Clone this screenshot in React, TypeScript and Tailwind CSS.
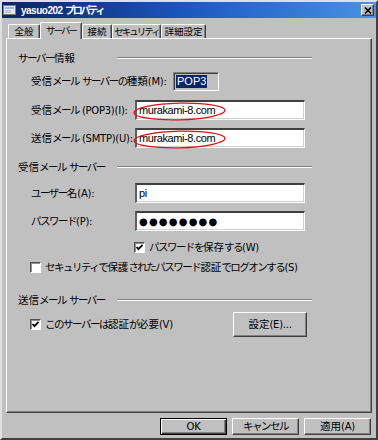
import React from "react";

type V = "label" | "tab" | "title";

const KANA = /[\u3040-\u30ff]/;
const KANJI = /[\u3400-\u9fff]/;

function runs(t: string) {
  const out: { type: string; s: string }[] = [];
  for (const ch of t) {
    const type = KANA.test(ch) ? "k" : KANJI.test(ch) ? "h" : "o";
    const last = out[out.length - 1];
    if (last && last.type === type) last.s += ch;
    else out.push({ type, s: ch });
  }
  return out;
}

const cls: Record<V, Record<string, string>> = {
  label: { k: "text-[10.5px] tracking-[-1.5px]", h: "text-[10.5px]", o: "text-[10px] tracking-[-0.25px]" },
  tab: { k: "text-[9.5px] tracking-[-2px]", h: "text-[9.5px]", o: "" },
  title: { k: "text-[10px] tracking-[-2.2px]", h: "text-[10px]", o: "" },
};

function Jp({ t, v = "label" }: { t: string; v?: V }) {
  return (
    <>
      {runs(t).map((r, i) => (
        <span key={i} className={cls[v][r.type]}>
          {r.s}
        </span>
      ))}
    </>
  );
}

function Heading({ t }: { t: string }) {
  return (
    <div className="flex items-center h-[12px] pl-[11px]">
      <div className="w-[99px] whitespace-nowrap">
        <Jp t={t} />
      </div>
      <div className="w-[195px] flex flex-col">
        <div className="h-[1px] bg-[#808080]" />
        <div className="h-[1px] bg-white" />
      </div>
    </div>
  );
}

function Ellipse() {
  return (
    <svg
      className="absolute left-[-5px] top-[-1px] pointer-events-none"
      width="100"
      height="22"
      viewBox="0 0 100 22"
    >
      <ellipse
        cx="47.5"
        cy="10.5"
        rx="45.5"
        ry="8.3"
        fill="none"
        stroke="#dd1111"
        strokeWidth="1.3"
        transform="rotate(-1.5 47.5 10.5)"
      />
    </svg>
  );
}

function TextInput({
  value,
  ellipse,
  dots,
}: {
  value: string;
  ellipse?: boolean;
  dots?: boolean;
}) {
  return (
    <div className="relative w-[170px] h-[20px] bg-white border-t-2 border-l-2 border-t-[#404040] border-l-[#606060] border-b border-r border-b-white border-r-white shadow-[inset_-1px_-1px_0_#d0d0d0] flex items-center pl-[2px]">
      {dots ? (
        <span className="font-['DejaVu_Sans',sans-serif] text-[10px] tracking-[1.2px] leading-none">
          ●●●●●●●●
        </span>
      ) : (
        <span className="font-['Liberation_Sans',sans-serif] text-[11px] tracking-[-0.4px] leading-none">
          {value}
        </span>
      )}
      {ellipse && <Ellipse />}
    </div>
  );
}

function Check({ checked }: { checked?: boolean }) {
  return (
    <div className="w-[11px] h-[11px] bg-white border-t border-l border-t-[#505050] border-l-[#505050] border-b border-r border-b-white border-r-white shadow-[inset_1px_1px_0_#909090] flex items-center justify-center shrink-0">
      {checked && (
        <svg width="9" height="9" viewBox="0 0 9 9">
          <path d="M1.5 4 L3.5 6.2 L7.5 1.8" fill="none" stroke="#000" strokeWidth="1.8" />
        </svg>
      )}
    </div>
  );
}

function Button({
  t,
  w,
  h,
  def,
}: {
  t: string;
  w: string;
  h: string;
  def?: boolean;
}) {
  return (
    <div
      className={
        def
          ? `${w} ${h} bg-[#c0c0c0] border border-black shadow-[inset_1px_1px_0_#ffffff,inset_-1px_-1px_0_#404040,inset_-2px_-2px_0_#808080] flex items-center justify-center whitespace-nowrap`
          : `${w} ${h} bg-[#c0c0c0] border-t border-l border-t-white border-l-white border-b border-r border-b-[#404040] border-r-[#404040] shadow-[inset_-1px_-1px_0_#808080] flex items-center justify-center whitespace-nowrap`
      }
    >
      <Jp t={t} />
    </div>
  );
}

function Tab({ t, w, sel }: { t: string; w: string; sel?: boolean }) {
  return (
    <div
      className={
        sel
          ? `${w} h-[17px] mb-[-1px] bg-[#c0c0c0] border-t border-l border-t-white border-l-white border-r border-r-[#404040] shadow-[inset_-1px_0_0_#808080] rounded-t-[2px] flex items-start justify-center pt-[2px] leading-[12px] whitespace-nowrap`
          : `${w} h-[14px] bg-[#c0c0c0] border-t border-l border-t-white border-l-white border-r border-r-[#404040] shadow-[inset_-1px_0_0_#808080] rounded-t-[2px] flex items-center justify-center leading-[12px] whitespace-nowrap`
      }
    >
      <Jp t={t} v="tab" />
    </div>
  );
}

export default function App() {
  return (
    <div className="w-[378px] h-[440px] bg-[#c0c0c0] border-2 border-t-[#dfdfdf] border-l-[#dfdfdf] border-r-[#404040] border-b-[#404040] flex flex-col text-black text-[11px] leading-[13px] font-['DejaVu_Sans','Noto_Sans_CJK_JP',sans-serif] overflow-hidden">
      {/* Title bar */}
      <div className="h-[16px] shrink-0 flex items-center bg-linear-to-r from-[#0a246a] via-[#1c58c0] to-[#4a92e4]">
        <svg className="ml-[1px] shrink-0" width="14" height="12" viewBox="0 0 14 12">
          <rect x="0.5" y="1.5" width="12" height="9" fill="#e8e8e8" stroke="#7a7a7a" />
          <rect x="2" y="3" width="9" height="2" fill="#9fb7d8" />
          <rect x="2" y="6" width="6" height="3" fill="#c8c8c8" />
        </svg>
        <div className="ml-[4px] text-white font-bold whitespace-nowrap font-['Liberation_Sans','Noto_Sans_CJK_JP',sans-serif] text-[10px] tracking-[-0.5px]">
          yasuo202 <Jp t="プロパティ" v="title" />
        </div>
        <div className="ml-auto mr-[2px] w-[13px] h-[12px] bg-[#c0c0c0] border-t border-l border-t-white border-l-white border-b border-r border-b-[#404040] border-r-[#404040] shadow-[inset_-1px_-1px_0_#808080] flex items-center justify-center">
          <svg width="8" height="7" viewBox="0 0 8 7">
            <path d="M1 0.5 L7 6.5 M7 0.5 L1 6.5" stroke="#000" strokeWidth="1.6" />
          </svg>
        </div>
      </div>

      {/* Tabs */}
      <div className="mt-[4px] h-[16px] shrink-0 flex items-end pl-[6px] relative z-10">
        <Tab t="全般" w="w-[32px]" />
        <Tab t="サーバー" w="w-[42px]" sel />
        <Tab t="接続" w="w-[30px]" />
        <Tab t="セキュリティ" w="w-[49px]" />
        <Tab t="詳細設定" w="w-[45px]" />
      </div>

      {/* Panel */}
      <div className="ml-[4px] mr-[4px] h-[375px] shrink-0 border-t border-l border-t-white border-l-white border-b border-r border-b-[#404040] border-r-[#404040] shadow-[inset_-1px_-1px_0_#808080] flex flex-col">
        <div className="mt-[13px]">
          <Heading t="サーバー情報" />
        </div>

        <div className="mt-[8px] flex items-center pl-[24px]">
          <div className="w-[142px] whitespace-nowrap">
            <Jp t="受信メール サーバーの種類(M):" />
          </div>
          <div className="w-[46px] h-[19px] border-t border-l border-t-[#808080] border-l-[#808080] border-b border-r border-b-white border-r-white shadow-[inset_1px_1px_0_#404040] flex items-center pl-[2px]">
            <span className="bg-[#0a246a] text-white font-['Liberation_Sans',sans-serif] text-[11px] leading-[13px] px-[1px]">
              POP3
            </span>
          </div>
        </div>

        <div className="mt-[9px] flex items-center pl-[24px]">
          <div className="w-[104px] whitespace-nowrap">
            <Jp t="受信メール (POP3)(I):" />
          </div>
          <TextInput value="murakami-8.com" ellipse />
        </div>

        <div className="mt-[8px] flex items-center pl-[24px]">
          <div className="w-[104px] whitespace-nowrap">
            <Jp t="送信メール (SMTP)(U):" />
          </div>
          <TextInput value="murakami-8.com" ellipse />
        </div>

        <div className="mt-[13px]">
          <Heading t="受信メール サーバー" />
        </div>

        <div className="mt-[10px] flex items-center pl-[24px]">
          <div className="w-[104px] whitespace-nowrap">
            <Jp t="ユーザー名(A):" />
          </div>
          <TextInput value="pi" />
        </div>

        <div className="mt-[8px] flex items-center pl-[24px]">
          <div className="w-[104px] whitespace-nowrap">
            <Jp t="パスワード(P):" />
          </div>
          <TextInput value="" dots />
        </div>

        <div className="mt-[10px] flex items-center pl-[127px] gap-[4px]">
          <Check checked />
          <div className="whitespace-nowrap">
            <Jp t="パスワードを保存する(W)" />
          </div>
        </div>

        <div className="mt-[7px] flex items-center pl-[23px] gap-[4px]">
          <Check />
          <div className="whitespace-nowrap">
            <Jp t="セキュリティで保護されたパスワード認証でログオンする(S)" />
          </div>
        </div>

        <div className="mt-[20px]">
          <Heading t="送信メール サーバー" />
        </div>

        <div className="mt-[6px] flex items-center pl-[23px]">
          <div className="w-[203px] flex items-center gap-[4px]">
            <Check checked />
            <div className="whitespace-nowrap">
              <Jp t="このサーバーは認証が必要(V)" />
            </div>
          </div>
          <Button t="設定(E)..." w="w-[74px]" h="h-[25px]" />
        </div>
      </div>

      {/* Bottom buttons */}
      <div className="mt-[5px] flex justify-end gap-[5px] pr-[5px]">
        <Button t="OK" w="w-[67px]" h="h-[17px]" def />
        <Button t="キャンセル" w="w-[67px]" h="h-[17px]" />
        <Button t="適用(A)" w="w-[67px]" h="h-[17px]" />
      </div>
    </div>
  );
}
